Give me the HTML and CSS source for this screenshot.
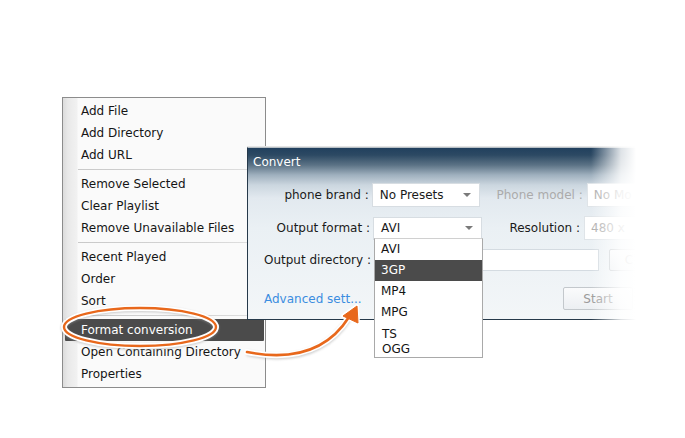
FILE: index.html
```html
<!DOCTYPE html>
<html>
<head>
<meta charset="utf-8">
<link rel="stylesheet" href="styles.css">
</head>
<body>
<div class="stage">
  <div class="menu">
    <div class="menu-item">Add File</div>
    <div class="menu-item">Add Directory</div>
    <div class="menu-item">Add URL</div>
    <div class="menu-sep"></div>
    <div class="menu-item">Remove Selected</div>
    <div class="menu-item">Clear Playlist</div>
    <div class="menu-item">Remove Unavailable Files</div>
    <div class="menu-sep"></div>
    <div class="menu-item">Recent Played</div>
    <div class="menu-item">Order</div>
    <div class="menu-item">Sort</div>
    <div class="menu-sep"></div>
    <div class="menu-item active">Format conversion</div>
    <div class="menu-item">Open Containing Directory</div>
    <div class="menu-item">Properties</div>
  </div>

  <div class="dialog">
    <div class="titlebar">Convert</div>
    <div class="dialog-body">
      <div class="row row1">
        <span class="label">phone brand :</span>
        <div class="select"><span>No Presets</span><span class="caret"></span></div>
        <span class="label2 w1 disabled">Phone model :</span>
        <div class="box disabled">No Mo</div>
      </div>
      <div class="row row2">
        <span class="label">Output format :</span>
        <div class="select"><span>AVI</span><span class="caret"></span></div>
        <span class="label2 w2">Resolution :</span>
        <div class="box disabled">480 x</div>
      </div>
      <div class="row row3">
        <span class="label">Output directory :</span>
        <div class="input"></div>
        <div class="btn small">C</div>
      </div>
      <div class="row row4">
        <span class="link">Advanced sett...</span>
        <div class="btn start">Start</div>
      </div>
    </div>
    <div class="fade"></div>
  </div>

  <div class="dropdown">
    <div class="dd-item">AVI</div>
    <div class="dd-item sel">3GP</div>
    <div class="dd-item">MP4</div>
    <div class="dd-item">MPG</div>
    <div class="dd-item ts">TS</div>
    <div class="dd-item ogg">OGG</div>
  </div>

  <svg class="annot" width="685" height="438" viewBox="0 0 685 438">
    <defs>
      <filter id="sh" x="-20%" y="-20%" width="140%" height="140%">
        <feGaussianBlur stdDeviation="1.2"/>
      </filter>
    </defs>
    <ellipse cx="140" cy="328" rx="76" ry="19" fill="none" stroke="#9a9a9a" stroke-width="6" opacity="0.5" filter="url(#sh)"/>
    <ellipse cx="140" cy="327" rx="76" ry="19" fill="none" stroke="#ffffff" stroke-width="6"/>
    <ellipse cx="140" cy="327" rx="76" ry="19" fill="none" stroke="#e8681c" stroke-width="2.4"/>
    <path d="M247 353 Q 318 368 349 318" fill="none" stroke="#9a9a9a" stroke-width="6" opacity="0.45" filter="url(#sh)"/>
    <path d="M247 352 Q 318 366 349 317" fill="none" stroke="#ffffff" stroke-width="6" stroke-linecap="round"/>
    <polygon points="357,306 358,323 343,316" fill="#ffffff" stroke="#ffffff" stroke-width="4" stroke-linejoin="round"/>
    <path d="M247 352 Q 318 366 349 317" fill="none" stroke="#e8681c" stroke-width="2.6" stroke-linecap="round"/>
    <polygon points="357,306 358,323 343,316" fill="#e8681c" stroke="#e8681c" stroke-width="1" stroke-linejoin="round"/>
  </svg>
</div>
</body>
</html>
```

FILE: styles.css
```css
* { box-sizing: border-box; }
html, body {
  margin: 0;
  padding: 0;
  background: #ffffff;
}
body {
  font-family: "DejaVu Sans", "Liberation Sans", sans-serif;
  font-size: 12px;
  color: #1a1a1a;
}
.stage {
  position: relative;
  width: 685px;
  height: 438px;
  overflow: hidden;
  background: #ffffff;
}

/* context menu */
.menu {
  position: absolute;
  left: 62px;
  top: 97px;
  width: 204px;
  height: 291px;
  border: 1px solid #8c8c8c;
  padding-top: 2px;
  background:
    linear-gradient(90deg, #dcdcdc 0, #e9e9e9 5px, #f1f1f1 14px, #fafafa 15px) no-repeat;
  display: flex;
  flex-direction: column;
}
.menu-item {
  height: 22px;
  line-height: 22px;
  padding-left: 18px;
  white-space: nowrap;
  color: #151515;
}
.menu-item.active {
  background: #4b4b4b;
  color: #ffffff;
  margin-left: 2px;
  margin-right: 1px;
  padding-left: 16px;
  border-radius: 1px;
}
.menu-sep {
  height: 7px;
  margin-left: 15px;
  position: relative;
}
.menu-sep::after {
  content: "";
  position: absolute;
  left: 0;
  right: 0;
  top: 3px;
  height: 1px;
  background: linear-gradient(90deg, #c9c9c9, #d6d6d6 70%, #e2e2e2);
}

/* dialog */
.dialog {
  position: absolute;
  left: 247px;
  top: 147px;
  width: 420px;
  height: 173px;
  border: 1px solid #26394a;
  border-top-color: #b8c0c6;
  background: linear-gradient(180deg, #21405e 0, #2c4963 7px, #5b7285 17px, #9fb0be 27px, #cbd6df 37px, #e2e9ef 50px, #eaf0f4 80px, #f3f6f8 100%);
  box-shadow: 0 -1px 0 #e4e4e4;
}
.titlebar {
  height: 27px;
  line-height: 29px;
  padding-left: 5px;
  color: #ffffff;
  font-size: 12px;
}
.dialog-body {
  display: flex;
  flex-direction: column;
  padding-top: 8px;
}
.row {
  display: flex;
  align-items: center;
  height: 24px;
}
.row2 { margin-top: 9px; }
.row3 { margin-top: 9px; height: 22px; }
.row4 { margin-top: 16px; height: 23px; }
.label {
  width: 125px;
  text-align: right;
  padding-right: 3px;
  white-space: nowrap;
}
.row3 .label { padding-right: 2px; }
.select {
  width: 109px;
  height: 24px;
  background: #ffffff;
  border: 1px solid #d7dde2;
  display: flex;
  align-items: center;
  justify-content: space-between;
  padding: 0 8px 0 7px;
}
.row2 .select { height: 23px; }
.caret {
  width: 0;
  height: 0;
  border-left: 4px solid transparent;
  border-right: 4px solid transparent;
  border-top: 4px solid #7a7a7a;
}
.label2 {
  text-align: right;
  white-space: nowrap;
  padding-right: 4px;
}
.label2.w1 { width: 108px; }
.label2.w2 { width: 102px; }
.disabled { color: #ababab; }
.box {
  width: 80px;
  height: 24px;
  line-height: 22px;
  background: #ffffff;
  border: 1px solid #dfe4e8;
  padding-left: 6px;
  white-space: nowrap;
  overflow: hidden;
}
.input {
  width: 225px;
  height: 22px;
  margin-left: 1px;
  background: #ffffff;
  border: 1px solid #d4dbe1;
}
.btn {
  height: 22px;
  border: 1px solid #c3c8cc;
  border-radius: 2px;
  background: linear-gradient(180deg, #fafbfc, #eceff2);
  color: #9a9a9a;
  display: flex;
  align-items: center;
  justify-content: center;
}
.btn.small {
  width: 40px;
  margin-left: 10px;
}
.link {
  color: #3b8de0;
  margin-left: 16px;
  width: 299px;
}
.btn.start {
  width: 70px;
  height: 23px;
  font-size: 12px;
}
.fade {
  position: absolute;
  top: -3px;
  bottom: -3px;
  right: -3px;
  width: 78px;
  background: linear-gradient(90deg, rgba(255,255,255,0) 0, rgba(255,255,255,0.85) 30px, #ffffff 45px);
}

/* dropdown list */
.dropdown {
  position: absolute;
  left: 374px;
  top: 238px;
  width: 109px;
  height: 120px;
  background: #ffffff;
  border: 1px solid #a9a9a9;
  border-top-color: #d0d0d0;
  display: flex;
  flex-direction: column;
}
.dd-item {
  height: 21px;
  line-height: 21px;
  padding-left: 6px;
  color: #151515;
}
.dd-item.sel {
  background: #4b4b4b;
  color: #ffffff;
}
.dd-item.ts {
  height: 16px;
  line-height: 16px;
  margin-top: 3px;
  padding-left: 7px;
}
.dd-item.ogg {
  height: 14px;
  line-height: 14px;
  padding-left: 7px;
}

/* annotations */
.annot {
  position: absolute;
  left: 0;
  top: 0;
  pointer-events: none;
}
```
